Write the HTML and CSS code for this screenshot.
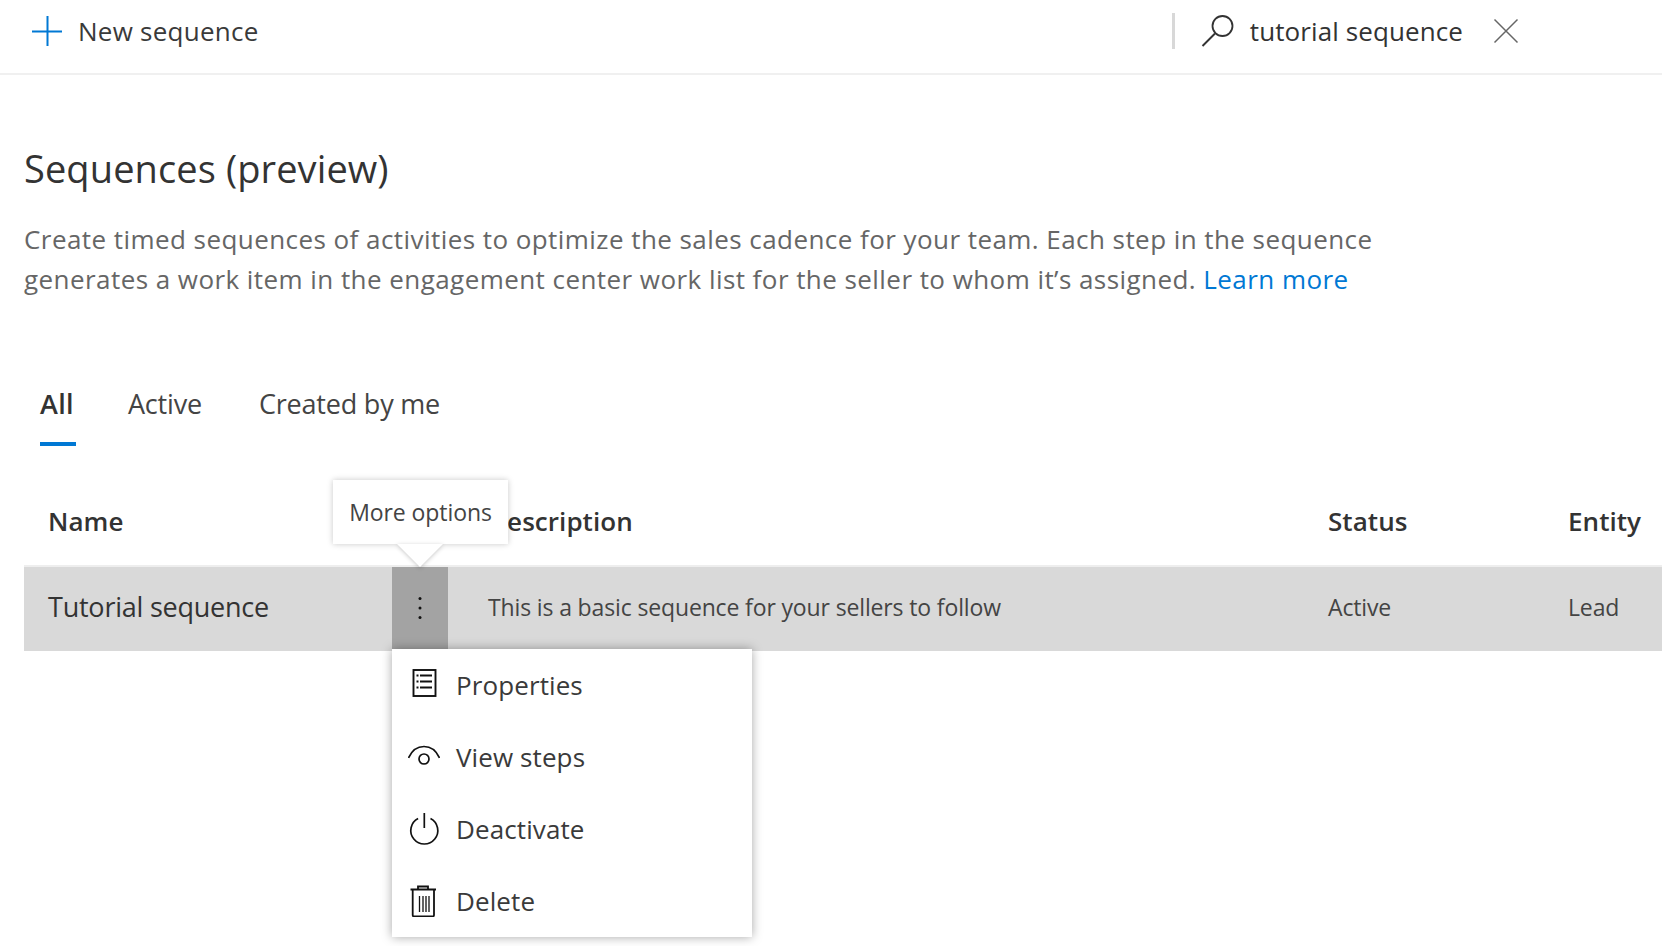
FILE: index.html
```html
<!DOCTYPE html>
<html lang="en">
<head>
<meta charset="utf-8">
<title>Sequences (preview)</title>
<link rel="stylesheet" href="styles.css">
</head>
<body>
<header class="cmdbar">
  <button class="new-btn">
    <svg class="plus" width="32" height="32" viewBox="0 0 32 32"><path d="M16.500 1v30M1 16.500h30" stroke="#0078d4" stroke-width="2" fill="none"/></svg>
    <span>New sequence</span>
  </button>
  <div class="search">
    <span class="divider"></span>
    <svg class="search-icon" width="34" height="34" viewBox="0 0 34 34"><circle cx="21.500" cy="12" r="10" stroke="#333" stroke-width="1.800" fill="none"/><path d="M14 19.500L1.500 32" stroke="#333" stroke-width="2" fill="none"/></svg>
    <span class="search-text">tutorial sequence</span>
    <svg class="close-icon" width="26" height="26" viewBox="0 0 26 26"><path d="M1.500 1.500l23 23M24.500 1.500l-23 23" stroke="#666" stroke-width="1.500" fill="none"/></svg>
  </div>
</header>
<main class="page">
  <h1 class="title">Sequences (preview)</h1>
  <p class="intro">Create timed sequences of activities to optimize the sales cadence for your team. Each step in the sequence<br>generates a work item in the engagement center work list for the seller to whom it’s assigned. <a href="#" class="link">Learn more</a></p>
  <nav class="tabs">
    <span class="tab tab-all">All</span>
    <span class="tab tab-active">Active</span>
    <span class="tab">Created by me</span>
  </nav>
  <section class="grid">
    <div class="grid-row grid-head">
      <span class="c-name">Name</span>
      <span class="c-more"></span>
      <span class="c-desc">Description</span>
      <span class="c-status">Status</span>
      <span class="c-entity">Entity</span>
    </div>
    <div class="grid-row grid-body">
      <span class="c-name name-val">Tutorial sequence</span>
      <span class="c-more kebab"><svg width="4" height="24" viewBox="0 0 4 24"><circle cx="2" cy="2.500" r="1.500" fill="#111"/><circle cx="2" cy="12" r="1.500" fill="#111"/><circle cx="2" cy="21.500" r="1.500" fill="#111"/></svg></span>
      <span class="c-desc">This is a basic sequence for your sellers to follow</span>
      <span class="c-status">Active</span>
      <span class="c-entity">Lead</span>
    </div>
  </section>
</main>
<div class="tooltip">More options<span class="tip-arrow"></span></div>
<ul class="menu">
  <li class="menu-item">
    <svg width="32" height="32" viewBox="0 0 32 32" fill="none" stroke="#111" stroke-width="1.900"><rect x="5.500" y="1" width="22" height="26"/><path d="M8.500 6.500h2M12 6.500h12M8.500 12.500h2M12 12.500h12M8.500 18.500h2M12 18.500h12"/></svg>
    <span>Properties</span>
  </li>
  <li class="menu-item">
    <svg width="32" height="32" viewBox="0 0 32 32" fill="none" stroke="#111" stroke-width="1.700"><path d="M.5 17C4 9 9.500 5.500 16 5.500S28 9 31.500 17"/><circle cx="16" cy="18" r="5"/></svg>
    <span>View steps</span>
  </li>
  <li class="menu-item">
    <svg width="32" height="32" viewBox="0 0 32 32" fill="none" stroke="#111" stroke-width="1.700"><path d="M10.100 5.500A13.500 13.500 0 1 0 22.500 5.500"/><path d="M16.300 0v15"/></svg>
    <span>Deactivate</span>
  </li>
  <li class="menu-item">
    <svg width="32" height="32" viewBox="0 0 32 32" fill="none" stroke="#111" stroke-width="1.800"><path d="M2.500 4.500h25.500M10 4.500V1.500h10v3M4.700 4.500V30q0 1.500 1.500 1.500h18.300q1.500 0 1.500-1.500V4.500"/><path d="M11.500 11v16M15 11v16M18 11v16M21 11v16" stroke-width="1.300"/></svg>
    <span>Delete</span>
  </li>
</ul>
</body>
</html>
```
FILE: styles.css
```css
* { box-sizing: border-box; }
html, body { margin: 0; height: 946px; overflow: hidden; }
body { position: relative; background: #fff; color: #333; font-family: "Open Sans", "Liberation Sans", sans-serif; }

.cmdbar { height: 75px; border-bottom: 2px solid #f0f0f0; display: flex; align-items: center; justify-content: space-between; padding: 0 143px 12px 31px; }
.new-btn { display: flex; align-items: center; gap: 15px; border: 0; background: none; padding: 0; font: inherit; font-size: 26px; color: #3a3a3a; letter-spacing: 0.25px; }
.search { display: flex; align-items: center; }
.divider { width: 3px; height: 36px; background: #d8d8d8; margin-right: 26px; }
.search-icon { margin-right: 15px; }
.search-text { font-size: 26px; color: #333; letter-spacing: 0.1px; margin-right: 30px; }

.page { padding: 0 0 0 24px; }
.title { margin: 67px 0 0; font-size: 38px; line-height: 52px; font-weight: 400; color: #333; letter-spacing: 0.1px; }
.intro { margin: 25px 0 0; font-size: 26px; line-height: 40px; color: #666; letter-spacing: 0.44px; white-space: nowrap; }
.link { color: #0078d4; text-decoration: none; }

.tabs { display: flex; margin: 85px 0 0; height: 91px; gap: 57px; }
.tab { font-size: 27px; line-height: 40px; color: #444; letter-spacing: -0.2px; }
.tab-all { box-sizing: content-box; width: 36px; height: 40px; margin-left: 16px; margin-right: -5px; padding-bottom: 18px; border-bottom: 4px solid #0078d4; font-weight: 600; color: #333; letter-spacing: 0.3px; }

.grid-row { display: flex; align-items: center; white-space: nowrap; }
.grid-head { height: 92px; padding-top: 1px; border-bottom: 2px solid #eee; font-size: 26px; font-weight: 600; color: #333; letter-spacing: 0.05px; }
.grid-body { height: 84px; padding-bottom: 5px; background: #d9d9d9; font-size: 23px; color: #444; letter-spacing: -0.14px; }
.c-name { width: 368px; padding-left: 24px; flex: none; }
.name-val { font-size: 27px; letter-spacing: -0.23px; color: #333; }
.c-more { width: 56px; flex: none; }
.kebab { height: calc(100% + 5px); margin-bottom: -5px; background: #a3a3a3; display: flex; align-items: center; justify-content: center; padding-bottom: 3px; }
.c-desc { width: 880px; padding-left: 40px; flex: none; }
.c-status { width: 240px; flex: none; }
.c-entity { width: 110px; flex: none; }

.tooltip { position: absolute; left: 333px; top: 480px; width: 175px; height: 64px; background: #fff; box-shadow: 0 0 6px rgba(0,0,0,.22); font-size: 23px; line-height: 65px; text-align: center; color: #444; letter-spacing: -0.08px; white-space: nowrap; }
.tip-arrow { position: absolute; left: 64px; top: 64px; width: 0; height: 0; border-left: 23px solid transparent; border-right: 23px solid transparent; border-top: 23px solid #fff; filter: drop-shadow(0 1px 2px rgba(0,0,0,.22)); }

.menu { position: absolute; left: 392px; top: 649px; width: 360px; height: 288px; margin: 0; padding: 0; list-style: none; background: #fff; box-shadow: 0 0 10px rgba(0,0,0,.35); }
.menu-item { height: 72px; display: flex; align-items: center; gap: 16px; padding-left: 16px; font-size: 26px; color: #3a3a3a; letter-spacing: 0.1px; }
```
